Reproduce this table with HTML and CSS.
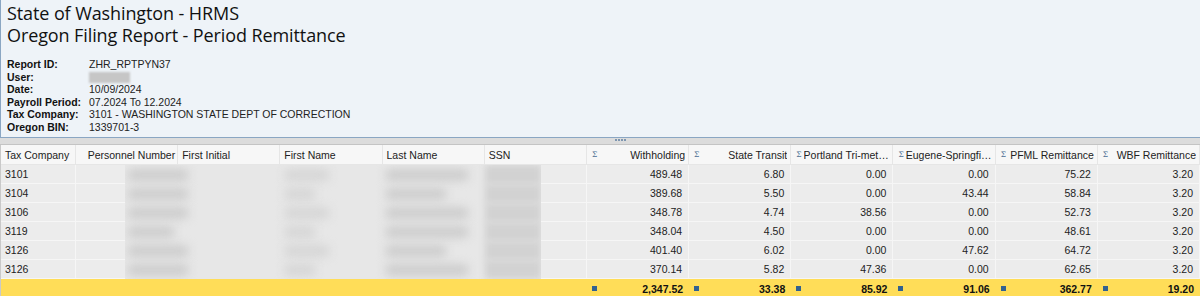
FILE: index.html
```html
<!DOCTYPE html>
<html lang="en">
<head>
<meta charset="utf-8">
<title>Oregon Filing Report - Period Remittance</title>
<link rel="stylesheet" href="styles.css">
</head>
<body>
<div class="page">
  <header class="report-head">
    <h1 class="title">State of Washington - HRMS</h1>
    <h2 class="title">Oregon Filing Report - Period Remittance</h2>
    <dl class="info">
      <dt>Report ID:</dt><dd>ZHR_RPTPYN37</dd>
      <dt>User:</dt><dd><span class="redact-user"></span></dd>
      <dt>Date:</dt><dd>10/09/2024</dd>
      <dt>Payroll Period:</dt><dd>07.2024 To 12.2024</dd>
      <dt>Tax Company:</dt><dd>3101 - WASHINGTON STATE DEPT OF CORRECTION</dd>
      <dt>Oregon BIN:</dt><dd>1339701-3</dd>
    </dl>
  </header>
  <div class="splitter"><span class="grip"></span></div>
  <div class="grid-wrap">
    <div class="grid">
      <div class="hc">Tax Company</div>
      <div class="hc right">Personnel Number</div>
      <div class="hc">First Initial</div>
      <div class="hc">First Name</div>
      <div class="hc">Last Name</div>
      <div class="hc">SSN</div>
      <div class="hc num"><span class="sig">Σ</span><span class="lbl">Withholding</span></div>
      <div class="hc num"><span class="sig">Σ</span><span class="lbl">State Transit</span></div>
      <div class="hc num tight"><span class="sig">Σ</span><span class="lbl">Portland Tri-met Transit</span></div>
      <div class="hc num tight"><span class="sig">Σ</span><span class="lbl">Eugene-Springfield Transit</span></div>
      <div class="hc num"><span class="sig">Σ</span><span class="lbl">PFML Remittance</span></div>
      <div class="hc num"><span class="sig">Σ</span><span class="lbl">WBF Remittance</span></div>

      <div class="c">3101</div><div class="c"></div><div class="c"></div><div class="c"></div><div class="c"></div><div class="c"></div>
      <div class="c r">489.48</div><div class="c r">6.80</div><div class="c r">0.00</div><div class="c r">0.00</div><div class="c r">75.22</div><div class="c r">3.20</div>

      <div class="c">3104</div><div class="c"></div><div class="c"></div><div class="c"></div><div class="c"></div><div class="c"></div>
      <div class="c r">389.68</div><div class="c r">5.50</div><div class="c r">0.00</div><div class="c r">43.44</div><div class="c r">58.84</div><div class="c r">3.20</div>

      <div class="c">3106</div><div class="c"></div><div class="c"></div><div class="c"></div><div class="c"></div><div class="c"></div>
      <div class="c r">348.78</div><div class="c r">4.74</div><div class="c r">38.56</div><div class="c r">0.00</div><div class="c r">52.73</div><div class="c r">3.20</div>

      <div class="c">3119</div><div class="c"></div><div class="c"></div><div class="c"></div><div class="c"></div><div class="c"></div>
      <div class="c r">348.04</div><div class="c r">4.50</div><div class="c r">0.00</div><div class="c r">0.00</div><div class="c r">48.61</div><div class="c r">3.20</div>

      <div class="c">3126</div><div class="c"></div><div class="c"></div><div class="c"></div><div class="c"></div><div class="c"></div>
      <div class="c r">401.40</div><div class="c r">6.02</div><div class="c r">0.00</div><div class="c r">47.62</div><div class="c r">64.72</div><div class="c r">3.20</div>

      <div class="c">3126</div><div class="c"></div><div class="c"></div><div class="c"></div><div class="c"></div><div class="c"></div>
      <div class="c r">370.14</div><div class="c r">5.82</div><div class="c r">47.36</div><div class="c r">0.00</div><div class="c r">62.65</div><div class="c r">3.20</div>

      <div class="t"></div><div class="t"></div><div class="t"></div><div class="t"></div><div class="t"></div><div class="t"></div>
      <div class="t tot"><span class="sq"></span><b>2,347.52</b></div>
      <div class="t tot"><span class="sq"></span><b>33.38</b></div>
      <div class="t tot"><span class="sq"></span><b>85.92</b></div>
      <div class="t tot"><span class="sq"></span><b>91.06</b></div>
      <div class="t tot"><span class="sq"></span><b>362.77</b></div>
      <div class="t tot"><span class="sq"></span><b>19.20</b></div>
    </div>
    <div class="redact">
      <div class="rrow"><i class="b1"></i><i class="b2"></i><i class="b3"></i><i class="b5"></i></div>
      <div class="rrow"><i class="b1"></i><i class="b2 s"></i><i class="b3 s"></i><i class="b5"></i></div>
      <div class="rrow"><i class="b1"></i><i class="b2"></i><i class="b3"></i><i class="b5"></i></div>
      <div class="rrow"><i class="b1 s"></i><i class="b2 s"></i><i class="b3"></i><i class="b5"></i></div>
      <div class="rrow"><i class="b1"></i><i class="b2"></i><i class="b3 s"></i><i class="b5"></i></div>
      <div class="rrow"><i class="b1"></i><i class="b2 s"></i><i class="b3"></i><i class="b5"></i></div>
    </div>
  </div>
</div>
</body>
</html>
```
FILE: styles.css
```css
* { box-sizing: border-box; }
html, body { margin: 0; padding: 0; }
body {
  width: 1200px;
  height: 296px;
  overflow: hidden;
  background: #ffffff;
  font-family: "Liberation Sans", Arial, sans-serif;
  font-size: 10.5px;
  color: #000;
}
.page { width: 1200px; }

.report-head {
  height: 138px;
  background: #eef3f8;
  border-left: 1px solid #8aa6c3;
  border-bottom: 1px solid #8aa6c3;
  padding: 2px 0 0 6px;
}
.title {
  margin: 0;
  font-family: "Open Sans", "Noto Sans", sans-serif;
  font-weight: 400;
  font-size: 18px;
  line-height: 22px;
  color: #111;
  letter-spacing: -0.1px;
}
.info {
  margin: 12px 0 0 0;
  display: grid;
  grid-template-columns: 82px auto;
  font-size: 10.5px;
  line-height: 12.5px;
}
.info dt { font-weight: 700; color: #111; }
.info dd { margin: 0; color: #222; }
.redact-user {
  display: inline-block;
  width: 41px;
  height: 11px;
  vertical-align: -2px;
  background: #c6c6c6;
  filter: blur(1.2px);
}

.splitter {
  height: 7px;
  background: #dcdcdc;
  border-bottom: 1px solid #c4c4c4;
  display: flex;
  justify-content: center;
  padding-left: 42px;
  align-items: flex-start;
}
.grip {
  width: 12px;
  height: 2px;
  margin-top: 1px;
  background-image: linear-gradient(90deg, #7e96b0 0 2px, transparent 2px 3px);
  background-size: 3px 2px;
}

.grid-wrap { position: relative; }
.grid {
  display: grid;
  grid-template-columns: 75px repeat(11, 1fr);
  grid-auto-rows: 19px;
  grid-template-rows: 20px;
  border-left: 1px solid #c9c9c9;
}
.hc {
  background: #f7f7f7;
  border-right: 1px solid #e6e6e6;
  border-bottom: 1px solid #e6e6e6;
  padding: 0 4px;
  line-height: 20px;
  white-space: nowrap;
  overflow: hidden;
  color: #222;
}
.hc.right { text-align: right; padding-right: 2px; }
.hc.num { display: flex; align-items: center; padding-left: 5px; padding-right: 3px; }
.sig {
  font-size: 7.5px;
  color: #4c6f93;
  font-family: "DejaVu Serif", serif;
  flex: none;
  margin-right: 3px;
}
.hc.tight .sig { margin-right: 2px; }
.lbl {
  flex: 1;
  min-width: 0;
  text-align: right;
  overflow: hidden;
  text-overflow: ellipsis;
  white-space: nowrap;
}
.hc.tight .lbl { text-align: left; }

.c {
  background: #ececec;
  border-right: 1px solid #f6f6f6;
  border-bottom: 1px solid #f6f6f6;
  padding: 0 4px;
  line-height: 18px;
  color: #222;
  white-space: nowrap;
}
.c.r { text-align: right; padding-right: 6px; }

.t { background: #ffdd58; }
.tot {
  display: flex;
  align-items: center;
  padding: 0 6px 0 5px;
}
.sq {
  width: 5px;
  height: 5px;
  background: #32618f;
  flex: none;
}
.tot b { flex: 1; text-align: right; font-weight: 700; color: #111; }

.redact {
  position: absolute;
  left: 125px;
  top: 20px;
  width: 416px;
  height: 114px;
  background: #e7e7e7;
  overflow: hidden;
  display: flex;
  flex-direction: column;
}
.rrow {
  height: 19px;
  display: flex;
  align-items: center;
}
.rrow i {
  display: block;
  height: 12px;
  background: #cdcdcd;
  filter: blur(5px);
  border-radius: 6px;
  flex: none;
}
.rrow .b1 { width: 62px; margin-left: 2px; }
.rrow .b2 { width: 46px; margin-left: 95px; background: #d6d6d6; }
.rrow .b3 { width: 84px; margin-left: 55px; }
.rrow .b5 { width: 56px; margin-left: 16px; height: 19px; background: #d2d2d2; border-radius: 0; filter: blur(3px); }
.rrow .b1.s { width: 48px; margin-right: 14px; }
.rrow .b2.s { width: 32px; margin-right: 14px; }
.rrow .b3.s { width: 62px; margin-right: 22px; }
```
